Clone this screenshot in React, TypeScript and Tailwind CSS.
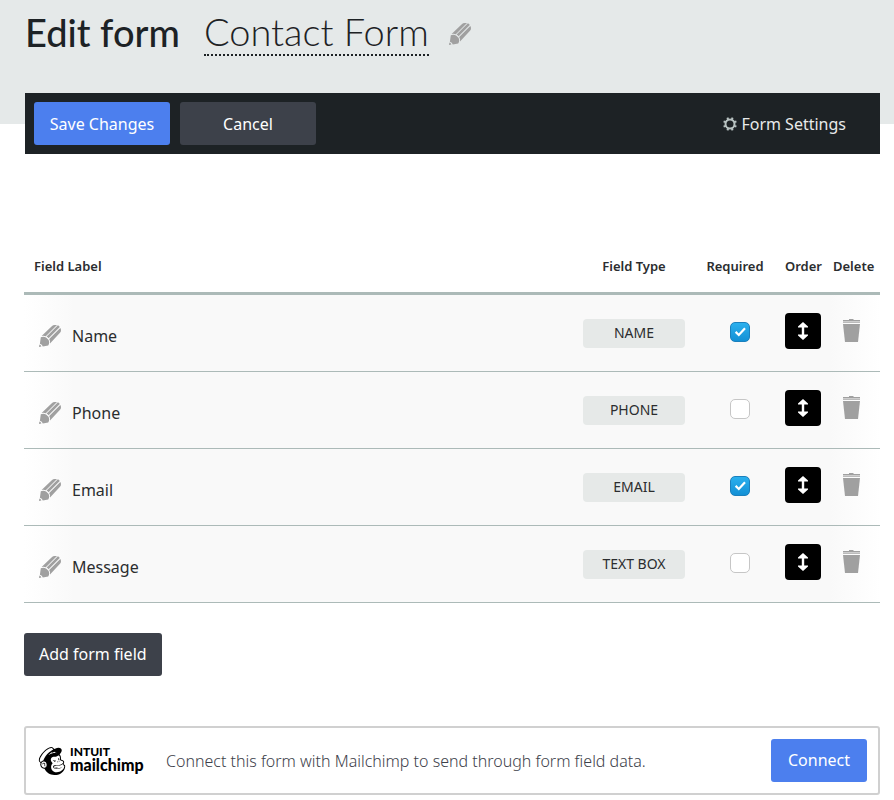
import React, { useState } from "react";
import { SiMailchimp } from "react-icons/si";

type Field = {
  label: string;
  type: string;
  required: boolean;
};

const initialFields: Field[] = [
  { label: "Name", type: "NAME", required: true },
  { label: "Phone", type: "PHONE", required: false },
  { label: "Email", type: "EMAIL", required: true },
  { label: "Message", type: "TEXT BOX", required: false },
];

function PencilIcon() {
  return (
    <svg viewBox="0 0 22 22" className="w-[22px] h-[22px] shrink-0" fill="#a0a0a0" aria-hidden="true">
      <path d="M2.6 11 12.8 1.2Q14 0 15.6 0H18L6.8 11.2Q4.6 10.4 2.6 11Z" />
      <path d="M7.6 11.6 18.9 0.3Q20.2 0.9 20.8 2.1L9.6 13.3Q8.8 12.2 7.6 11.6Z" />
      <path d="M10.2 14.1 21.3 3Q22 4 22 5.2 22 6.8 21 7.8L11 18.4Q11.4 16 10.2 14.1Z" />
      <path d="M1.8 12.2Q4.8 11.1 7.4 12.8 10 14.6 10.2 17.2 10.2 19 9.2 20.6L3.8 21.4Q3.2 19.2 0.9 18.7Z" />
      <path d="M0.4 19.6Q2 20 2.4 21.4L0 22Z" />
    </svg>
  );
}

function TrashIcon() {
  return (
    <svg viewBox="0 0 17 23" className="w-[17px] h-[23px]" fill="#a0a0a0" aria-hidden="true">
      <path d="M6 0h4.5v1H17v1.4H0V1h6Z" />
      <path d="M0 3h17v1H0Z" opacity="0.7" />
      <path d="M0 5h17l-2 18H2Z" />
    </svg>
  );
}

function GearIcon() {
  return (
    <svg viewBox="0 0 14 14" className="w-[14px] h-[14px]" fill="none" stroke="#b8c2c1" aria-hidden="true">
      <circle cx="7" cy="7" r="4.5" strokeWidth="2" />
      <path
        d="M4.4 0.6 5.4 3.2M9.6 0.6 8.6 3.2M4.4 13.4l1-2.6M9.6 13.4l-1-2.6M0.6 4.4l2.6 1M0.6 9.6l2.6-1M13.4 4.4l-2.6 1M13.4 9.6l-2.6-1"
        strokeWidth="2"
      />
    </svg>
  );
}

function MoveIcon() {
  return (
    <svg viewBox="0 0 10 18" className="w-[10px] h-[18px]" fill="#fff" aria-hidden="true">
      <path d="M5 0 10 4.4V5.4H6.2V12.6H10V13.6L5 18 0 13.6V12.6H3.8V5.4H0V4.4Z" />
    </svg>
  );
}

function FieldRow({ field, onToggle }: { field: Field; onToggle: () => void }) {
  return (
    <tr className="h-[77px] bg-[linear-gradient(to_right,#fff,#f9f9f9_50px,#f9f9f9_calc(100%-50px),#fff)]">
      <td className="border-b border-[#acbab8] pl-[15px] pt-1.5">
        <button className="flex items-center gap-[11px] text-base">
          <PencilIcon />
          {field.label}
        </button>
      </td>
      <td className="border-b border-[#acbab8]">
        <span className="mx-auto block h-[29px] w-[102px] rounded bg-[#e6e9e8] text-center text-[14px] leading-[27px]">
          {field.type}
        </span>
      </td>
      <td className="border-b border-[#acbab8] pb-0.5">
        <label className="relative mx-auto block h-5 w-5">
          <input
            type="checkbox"
            aria-label={field.label + " required"}
            checked={field.required}
            onChange={onToggle}
            className="block h-5 w-5 appearance-none rounded-[5px] border border-[#c6c6c6] bg-white checked:border-[#1b80bd] checked:bg-linear-to-b checked:from-[#2bb0ee] checked:to-[#1390d5]"
          />
          {field.required && (
            <svg viewBox="0 0 20 20" className="pointer-events-none absolute inset-0" fill="none" stroke="#fff" strokeWidth="2.2">
              <path d="M5.6 9.9 8.8 13 15 6.2" />
            </svg>
          )}
        </label>
      </td>
      <td className="border-b border-[#acbab8] pb-1">
        <button aria-label={"Move " + field.label} className="flex h-9 w-9 items-center justify-center rounded bg-black">
          <MoveIcon />
        </button>
      </td>
      <td className="border-b border-[#acbab8] pb-1.5 pl-[18px]">
        <button aria-label={"Delete " + field.label} className="block">
          <TrashIcon />
        </button>
      </td>
    </tr>
  );
}

export default function App() {
  const [fields, setFields] = useState(initialFields);

  const toggle = (index: number) => {
    setFields(fields.map((f, i) => (i === index ? { ...f, required: !f.required } : f)));
  };

  return (
    <div className="bg-white font-['Noto_Sans',sans-serif] text-[#2b2d2f]">
      <header className="flex h-[124px] items-start bg-[#e5e9e9] pl-[25px] pt-2 text-[#1d2225]">
        <h1 className="font-['Lato',sans-serif] text-[38px] leading-[48px] font-medium">Edit form</h1>
        <button className="ml-6 flex items-center gap-5">
          <span className="border-b-2 border-dotted border-[#1d2225] font-['Lato',sans-serif] text-[38px] leading-[46px] font-light">
            Contact Form
          </span>
          <span className="pt-1">
            <PencilIcon />
          </span>
        </button>
      </header>

      <div className="-mt-[31px] mr-[14px] ml-[25px] flex items-center gap-[10px] bg-[#1d2225] p-[9px] text-base text-white">
        <button className="h-[43px] w-[136px] rounded-[3px] bg-[#4c7fee]">Save Changes</button>
        <button className="h-[43px] w-[136px] rounded-[3px] bg-[#3d414a]">Cancel</button>
        <a href="#" className="mr-[25px] ml-auto flex items-center gap-1 text-[#e8eaea]">
          <GearIcon />
          Form Settings
        </a>
      </div>

      <main className="mt-[86px] mr-[14px] ml-6">
        <table className="w-full table-fixed border-separate border-spacing-0">
          <colgroup>
            <col />
            <col className="w-[122px]" />
            <col className="w-[90px]" />
            <col className="w-[40px]" />
            <col className="w-[55px]" />
          </colgroup>
          <thead>
            <tr className="h-[55px] text-[13px] whitespace-nowrap">
              <th className="border-b-3 border-[#acbab8] pt-0.5 pl-[10px] text-left font-semibold">Field Label</th>
              <th className="border-b-3 border-[#acbab8] pt-0.5 font-semibold">Field Type</th>
              <th className="border-b-3 border-[#acbab8] pt-0.5 pr-[10px] font-semibold">Required</th>
              <th className="border-b-3 border-[#acbab8] pt-0.5 text-left font-semibold">Order</th>
              <th className="border-b-3 border-[#acbab8] pt-0.5 pl-2 text-left font-semibold">Delete</th>
            </tr>
          </thead>
          <tbody>
            {fields.map((field, i) => (
              <FieldRow key={field.label} field={field} onToggle={() => toggle(i)} />
            ))}
          </tbody>
        </table>

        <button className="mt-[30px] block h-[43px] rounded-[3px] bg-[#3d414a] px-[15px] pb-0.5 text-base text-white">
          Add form field
        </button>

        <section className="mt-[50px] flex items-center rounded-[3px] border-2 border-[#d0d0d0] py-[11px] pr-[11px] pl-3">
          <div className="flex w-[108px] items-center gap-1 text-black">
            <SiMailchimp className="h-[28px] w-[28px] shrink-0" />
            <div className="pb-1 font-['Lato',sans-serif]">
              <div className="text-[12px] leading-3 font-black">INTUIT</div>
              <div className="text-[16px] leading-[14px] font-black">mailchimp</div>
            </div>
          </div>
          <p className="ml-5 text-base font-light text-[#3d414a]">
            Connect this form with Mailchimp to send through form field data.
          </p>
          <button className="ml-auto h-[43px] w-24 rounded-[3px] bg-[#4c7fee] pb-0.5 text-base text-white">Connect</button>
        </section>
      </main>
    </div>
  );
}
